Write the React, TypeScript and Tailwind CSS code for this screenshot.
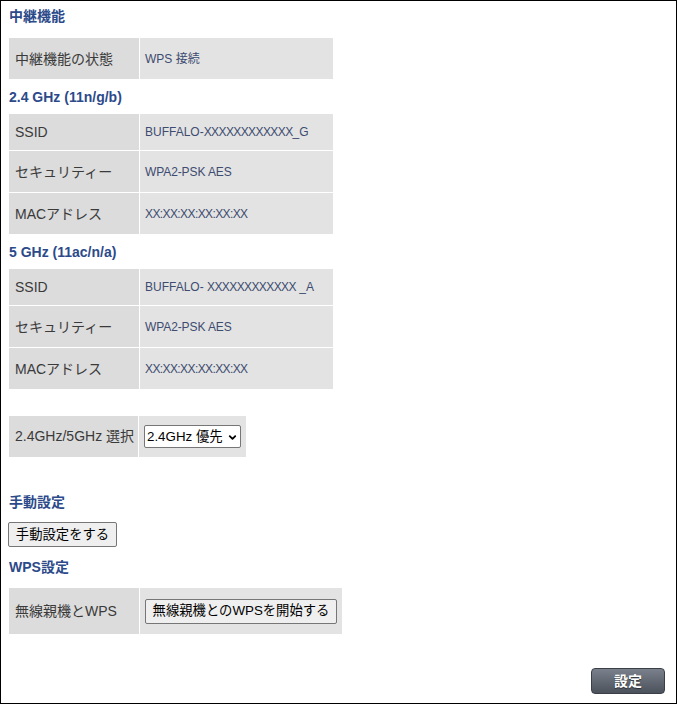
import { ChevronDown } from "lucide-react";

const font = "font-['Liberation_Sans','Noto_Sans_CJK_JP',sans-serif]";

type Row = { label: string; value: React.ReactNode; h: string };

function Heading({ children, className = "" }: { children: React.ReactNode; className?: string }) {
  return (
    <div className={`ml-px text-[14px] font-bold leading-[20px] text-[#2c4a8a] ${className}`}>{children}</div>
  );
}

function InfoTable({ rows, className = "" }: { rows: Row[]; className?: string }) {
  return (
    <table className={`w-[326px] self-start border-separate border-spacing-[1px] ${className}`}>
      <tbody>
        {rows.map((r, i) => (
          <tr key={i}>
            <td className={`${r.h} w-[130px] bg-[#dcdcdc] pl-[6px] align-middle text-[14px] leading-[18px] text-[#3a3a3a]`}>
              {r.label}
            </td>
            <td className="w-[193px] bg-[#e3e3e3] pl-[5px] align-middle text-[12px] leading-[16px] text-[#3d4c70]">
              {r.value}
            </td>
          </tr>
        ))}
      </tbody>
    </table>
  );
}

const xs = "tracking-[-0.6px]";

export default function App() {
  return (
    <div className={`${font} box-border flex h-[704px] w-[677px] flex-col items-start border border-black bg-white pl-[7px]`}>
      <Heading className="mt-[5px]">中継機能</Heading>
      <InfoTable
        className="mt-[11px]"
        rows={[{ label: "中継機能の状態", value: "WPS 接続", h: "h-[41px]" }]}
      />

      <Heading className="mt-[7px]">2.4 GHz (11n/g/b)</Heading>
      <InfoTable
        className="mt-[6px]"
        rows={[
          { label: "SSID", value: <>BUFFALO-<span className={xs}>XXXXXXXXXXXX</span>_G</>, h: "h-[36px]" },
          { label: "セキュリティー", value: <span className="tracking-[-0.1px]">WPA2-PSK AES</span>, h: "h-[41px]" },
          { label: "MACアドレス", value: <span className="tracking-[-0.6px]">XX:XX:XX:XX:XX:XX</span>, h: "h-[41px]" },
        ]}
      />

      <Heading className="mt-[7px]">5 GHz (11ac/n/a)</Heading>
      <InfoTable
        className="mt-[6px]"
        rows={[
          { label: "SSID", value: <>BUFFALO- <span className={xs}>XXXXXXXXXXXX</span> _A</>, h: "h-[36px]" },
          { label: "セキュリティー", value: <span className="tracking-[-0.1px]">WPA2-PSK AES</span>, h: "h-[41px]" },
          { label: "MACアドレス", value: <span className="tracking-[-0.6px]">XX:XX:XX:XX:XX:XX</span>, h: "h-[41px]" },
        ]}
      />

      <table className="mt-[25px] w-[239px] border-separate border-spacing-[1px]">
        <tbody>
          <tr>
            <td className="h-[41px] w-[129px] bg-[#dcdcdc] pl-[6px] align-middle text-[14px] text-[#3a3a3a]">
              2.4GHz/5GHz 選択
            </td>
            <td className="w-[107px] bg-[#e3e3e3] pl-[5px] align-middle">
              <div className="relative flex h-[23px] w-[97px] items-center rounded-[2px] border border-[#767676] bg-white">
                <select className="h-full w-full appearance-none pl-[2px] text-[13.33px] text-black outline-none">
                  <option>2.4GHz 優先</option>
                  <option>5GHz 優先</option>
                </select>
                <ChevronDown size={11} strokeWidth={4} className="pointer-events-none absolute right-[2px] top-[6px] text-black" />
              </div>
            </td>
          </tr>
        </tbody>
      </table>

      <Heading className="mt-[34px]">手動設定</Heading>
      <button className="mt-[10px] h-[25px] w-[109px] rounded-[2px] border border-[#767676] bg-[#efefef] px-[6px] text-[13.33px] text-black">
        手動設定をする
      </button>

      <Heading className="mt-[10px]">WPS設定</Heading>
      <table className="mt-[10px] w-[335px] border-separate border-spacing-[1px]">
        <tbody>
          <tr>
            <td className="h-[46px] w-[130px] bg-[#dcdcdc] pl-[6px] align-middle text-[14px] text-[#3a3a3a]">
              無線親機とWPS
            </td>
            <td className="w-[202px] bg-[#e3e3e3] pl-[5px] align-middle">
              <button className="h-[25px] w-[192px] rounded-[2px] border border-[#767676] bg-[#efefef] px-[5px] text-[13.33px] text-black">
                無線親機とのWPSを開始する
              </button>
            </td>
          </tr>
        </tbody>
      </table>

      <div className="mt-auto mb-[9px] flex w-[657px] justify-end">
        <button className="h-[26px] w-[74px] rounded-[4px] border border-[#3a3f47] bg-gradient-to-b from-[#7a818c] to-[#4b525c] text-[14px] font-bold text-white [text-shadow:0_1px_1px_rgba(0,0,0,0.5)]">
          設定
        </button>
      </div>
    </div>
  );
}
